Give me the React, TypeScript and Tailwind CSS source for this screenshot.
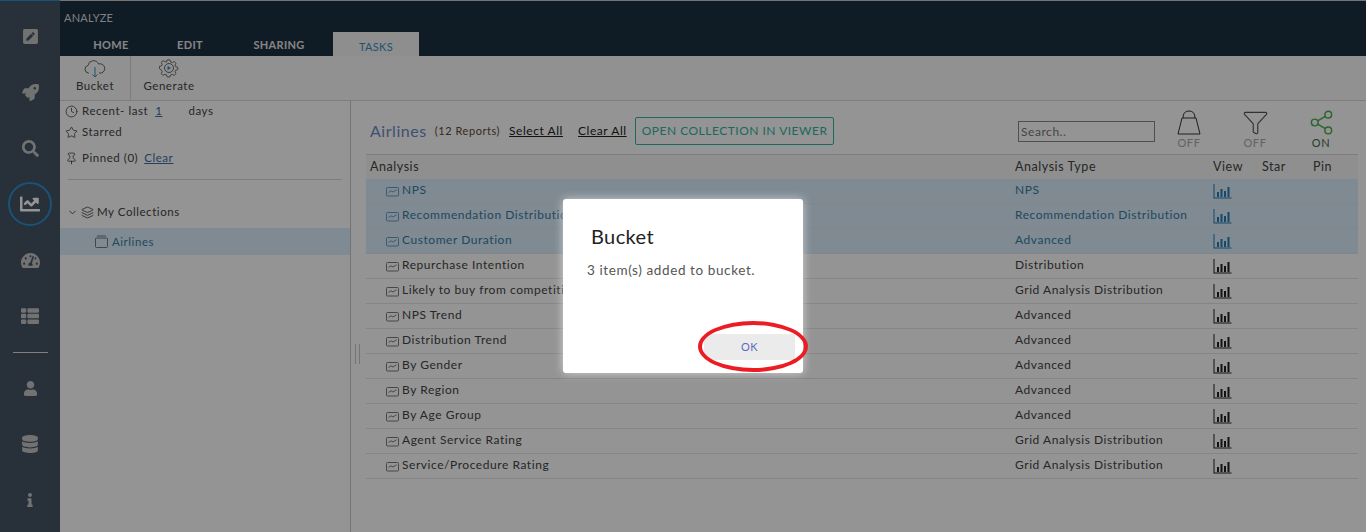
import { ChevronDown, Clock, Filter, Layers, Pin, Share2, Star } from "lucide-react";
import { FaChartLine, FaDatabase, FaInfo, FaPenSquare, FaRocket, FaSearch, FaTachometerAlt, FaThList, FaUser } from "react-icons/fa";

const font = "font-['Lato','Liberation_Sans',sans-serif]";

const rows = [
    { name: "NPS", type: "NPS", picked: true },
    { name: "Recommendation Distribution", type: "Recommendation Distribution", picked: true },
    { name: "Customer Duration", type: "Advanced", picked: true },
    { name: "Repurchase Intention", type: "Distribution" },
    { name: "Likely to buy from competition", type: "Grid Analysis Distribution" },
    { name: "NPS Trend", type: "Advanced" },
    { name: "Distribution Trend", type: "Advanced" },
    { name: "By Gender", type: "Advanced" },
    { name: "By Region", type: "Advanced" },
    { name: "By Age Group", type: "Advanced" },
    { name: "Agent Service Rating", type: "Grid Analysis Distribution" },
    { name: "Service/Procedure Rating", type: "Grid Analysis Distribution" },
];

function ReportIcon() {
    return (
        <svg width="13" height="11" viewBox="0 0 13 11" fill="none" stroke="currentColor" className="shrink-0 opacity-70">
            <rect x="0.5" y="1.5" width="12" height="8.5" rx="1" />
            <path d="M2.5 6.5 L5 4.8 L7 6 L10.5 3.8" />
        </svg>
    );
}

function BarsIcon() {
    return (
        <svg width="19" height="15" viewBox="0 0 19 15" fill="currentColor">
            <path d="M0.5 0h1v13.5h17v1H0.5z" />
            <rect x="4" y="8" width="2" height="5" />
            <rect x="7.5" y="5" width="2" height="8" />
            <rect x="11" y="7" width="2" height="6" />
            <rect x="14.5" y="3" width="2" height="10" />
        </svg>
    );
}

function SideItem({ children, active }: { children: React.ReactNode; active?: boolean }) {
    return (
        <div className={`flex items-center justify-center h-[44px] w-[44px] rounded-full ${active ? "border-2 border-[#2b8fd0] text-white" : "text-[#c4c4c4]"}`}>
            {children}
        </div>
    );
}

function Toggle({ label, on, children }: { label: string; on?: boolean; children: React.ReactNode }) {
    return (
        <div className="flex flex-col items-center w-[66px]">
            {children}
            <span className={`text-[11px] leading-[12px] tracking-[0.6px] ${on ? "text-[#3d6a55]" : "text-[#aaa]"}`}>{label}</span>
        </div>
    );
}

export default function App() {
    return (
        <div className={`${font} relative flex h-[532px] w-[1366px] overflow-hidden bg-white text-[#444] text-[12px] tracking-[0.55px]`}>
            <aside className="flex flex-col items-center w-[60px] shrink-0 bg-[#455464] border-t border-[#2b8fd0] pt-[13px]">
                <div className="flex flex-col items-center gap-[12px]">
                    <SideItem><FaPenSquare size={17} /></SideItem>
                    <SideItem><FaRocket size={17} /></SideItem>
                    <SideItem><FaSearch size={17} /></SideItem>
                    <SideItem active><FaChartLine size={20} /></SideItem>
                    <SideItem><FaTachometerAlt size={19} /></SideItem>
                    <SideItem><FaThList size={18} /></SideItem>
                </div>
                <div className="w-[35px] h-px bg-[#ddd] mt-[14px] mb-[13px]" />
                <div className="flex flex-col items-center gap-[12px]">
                    <SideItem><FaUser size={15} /></SideItem>
                    <SideItem><FaDatabase size={18} /></SideItem>
                    <SideItem><FaInfo size={14} /></SideItem>
                </div>
            </aside>

            <div className="flex flex-col flex-1 min-w-0">
                <header className="flex flex-col h-[56px] shrink-0 bg-[#1a2f40] border-t border-[#c8c8c8] pl-[4px]">
                    <div className="h-[31px] pt-[10px] text-[11px] leading-[13px] text-[#ddd] tracking-[0.2px]">ANALYZE</div>
                    <nav className="flex items-end flex-1 pl-[3px] text-[11px] font-bold tracking-[0.3px] text-[#e6e6e6]">
                        <div className="w-[88px] pb-[3px] text-center">HOME</div>
                        <div className="w-[70px] pb-[3px] text-center">EDIT</div>
                        <div className="w-[108px] pb-[3px] text-center">SHARING</div>
                        <div className="w-[86px] h-[24px] pt-[7px] text-center bg-[#f4f4f4] font-normal text-[#3a8fc4]">TASKS</div>
                    </nav>
                </header>

                <div className="flex h-[45px] shrink-0 border-b border-[#d8d8d8] bg-[#fafafa]">
                    <div className="flex flex-col items-center w-[71px] border-r border-[#d8d8d8] pt-[3px]">
                        <svg width="22" height="19" viewBox="0 0 22 19" fill="none" stroke="#666">
                            <path d="M5 14 H4.5 A3.8 3.8 0 0 1 4 6.5 A5.5 5.5 0 0 1 14.5 5 A4.6 4.6 0 0 1 17.5 14 H15" />
                            <path d="M11 8v10M8.5 15.5 11 18l2.5-2.5" stroke="#3a8fc4" />
                        </svg>
                        <span className="text-[11.5px] leading-[14px] mt-[1px]">Bucket</span>
                    </div>
                    <div className="flex flex-col items-center w-[76px] pt-[3px]">
                        <svg width="20" height="19" viewBox="0 0 20 19" fill="none" stroke="#666">
                            <path d="M8.5 1h3l.5 2.2 1.8.8 2-1.2 2 2-1.2 2 .8 1.8 2.1.5v2.800l-2.100.5-.8 1.800 1.200 2-2 2-2-1.200-1.800.8-.5 2.100h-3l-.5-2.100-1.800-.8-2 1.200-2-2 1.200-2-.8-1.800L.500 10.900V8.100l2.100-.5.8-1.800-1.200-2 2-2 2 1.200L8 3.200z" transform="scale(.96 .9)" />
                            <circle cx="10" cy="9" r="4.500" />
                            <path d="M8.500 6.800v4.400L12 9z" fill="#3a8fc4" stroke="none" />
                        </svg>
                        <span className="text-[11.500px] leading-[14px] mt-[1px]">Generate</span>
                    </div>
                </div>

                <div className="flex flex-1 min-h-0">
                    <section className="relative w-[291px] shrink-0 border-r border-[#c8c8c8] pt-[2px] text-[11.500px]">
                        <div className="flex items-center h-[16px] pl-[5px] gap-[4px]">
                            <Clock size={13} strokeWidth={1.500} />
                            <span>Recent- last</span>
                            <span className="ml-[3px] text-[#3a6ea5] underline">1</span>
                            <span className="ml-[22px]">days</span>
                        </div>
                        <div className="flex items-center h-[16px] mt-[5px] pl-[5px] gap-[4px]">
                            <Star size={13} strokeWidth={1.500} />
                            <span>Starred</span>
                        </div>
                        <div className="flex items-center h-[16px] mt-[10px] pl-[5px] gap-[4px]">
                            <Pin size={13} strokeWidth={1.500} />
                            <span>Pinned (0)</span>
                            <span className="ml-[2px] text-[#3a6ea5] underline">Clear</span>
                        </div>
                        <div className="h-px bg-[#d8d8d8] mx-[8px] mt-[13px]" />
                        <div className="flex items-center h-[16px] mt-[24px] pl-[7px] gap-[3px]">
                            <ChevronDown size={11} />
                            <Layers size={13} strokeWidth={1.500} />
                            <span>My Collections</span>
                        </div>
                        <div className="flex items-center h-[27px] mt-[8px] pl-[35px] gap-[4px] bg-[#dbeefc] text-[#3a7da3]">
                            <svg width="13" height="13" viewBox="0 0 13 13" fill="none" stroke="#777">
                                <rect x="0.500" y="3" width="12" height="9.500" rx="1" />
                                <path d="M2 1h9" />
                            </svg>
                            <span>Airlines</span>
                        </div>
                        <div className="absolute right-[-10px] top-[243px] h-[20px] w-[5px] border-x border-[#c8c8c8]" />
                    </section>

                    <main className="flex-1 min-w-0 pl-[15px] pr-[8px]">
                        <div className="flex items-center h-[54px] border-b border-[#d8d8d8] pl-[4px] pt-[7px]">
                            <span className="text-[16px] text-[#6d8bc4]">Airlines</span>
                            <span className="ml-[8px] text-[11px] text-[#5a4a3a]">(12 Reports)</span>
                            <span className="ml-[9px] text-[#222] underline">Select All</span>
                            <span className="ml-[15px] text-[#222] underline">Clear All</span>
                            <span className="ml-[8px] h-[28px] leading-[26px] px-[6px] border border-[#35b3a0] rounded-[2px] text-[#35b3a0] tracking-[0.500px]">OPEN COLLECTION IN VIEWER</span>
                            <span className="ml-auto w-[137px] h-[21px] border border-[#888] pl-[2px] leading-[19px] text-[#777]">Search..</span>
                            <div className="flex ml-[1px] mr-[4px] -mt-[5px]">
                                <Toggle label="OFF">
                                    <svg width="24" height="27" viewBox="0 0 24 27" fill="none" stroke="#333" className="mb-[1px]">
                                        <path d="M6 9 Q6 2 12 2 Q18 2 18 9" />
                                        <path d="M5 9 H19 L23 25 H1 Z" />
                                    </svg>
                                </Toggle>
                                <Toggle label="OFF"><Filter size={27} strokeWidth={1} className="mb-[1px] text-[#555]" /></Toggle>
                                <Toggle label="ON" on><Share2 size={27} strokeWidth={1.300} className="mb-[1px] text-[#4caf50]" /></Toggle>
                            </div>
                        </div>
                        <div className="flex items-center h-[24px] bg-[#f7f7f7] text-[12.500px] pl-[4px]">
                            <span className="w-[645px]">Analysis</span>
                            <span className="w-[198px]">Analysis Type</span>
                            <span className="w-[49px]">View</span>
                            <span className="w-[51px]">Star</span>
                            <span>Pin</span>
                        </div>
                        {rows.map((r) => (
                            <div key={r.name} className={`flex items-center h-[25px] border-b border-[#e6e6e6] pl-[20px] ${r.picked ? "bg-[#dbeefc] text-[#3a7da3]" : ""}`}>
                                <div className="flex items-center gap-[3px] w-[629px]">
                                    <ReportIcon />
                                    <span className="-mt-[2px]">{r.name}</span>
                                </div>
                                <span className="w-[198px] -mt-[2px]">{r.type}</span>
                                <span className={r.picked ? "text-[#2a7cb0]" : "text-[#222]"}><BarsIcon /></span>
                            </div>
                        ))}
                    </main>
                </div>
            </div>

            <div className="absolute inset-0 flex justify-center pt-[199px] bg-black/[.42]">
                <div className="flex flex-col w-[240px] h-[174px] bg-white rounded-[3px] shadow-[0_0_10px_rgba(255,255,255,0.6)]">
                    <h2 className="pl-[28px] pt-[24px] text-[20px] leading-[26px] text-[#222] tracking-[0.4px]">Bucket</h2>
                    <p className="pl-[24px] mt-[12px] text-[13.500px] leading-[18px] text-[#555] tracking-[0.6px]">3 item(s) added to bucket.</p>
                    <div className="relative mt-auto mb-[13px] ml-auto mr-[8px]">
                        <button className="block w-[91px] h-[26px] bg-[#ebebeb] rounded-[2px] text-[11px] text-[#5c6bc0]">OK</button>
                        <div className="absolute left-[-6px] top-[-13px] w-[110px] h-[51px] rounded-[50%] border-[4.500px] border-[#ed1c24]" />
                    </div>
                </div>
            </div>
        </div>
    );
}
